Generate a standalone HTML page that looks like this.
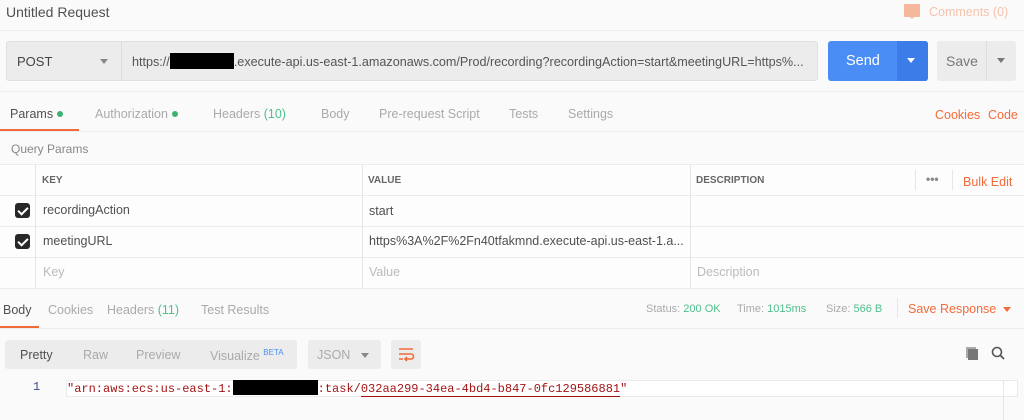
<!DOCTYPE html>
<html><head><style>
*{box-sizing:border-box;margin:0;padding:0}
body{width:1024px;height:420px;background:#fafafa;font-family:"Liberation Sans",sans-serif;font-size:12px;color:#505050;position:relative;overflow:hidden}
.a{position:absolute;white-space:nowrap}
.hl{position:absolute;left:0;width:1024px;height:1px;background:#ececec}
.vl{position:absolute;width:1px;background:#e6e6e6}
.g{color:#aaa}
.gr{color:#4fc08d}
.o{color:#f26b3a}
.dot{display:inline-block;width:6px;height:6px;border-radius:50%;background:#3cb371;margin-left:4px;vertical-align:1px}
.cb{position:absolute;width:15px;height:15px;background:#282828;border-radius:3px}
.cb:after{content:"";position:absolute;left:5px;top:2px;width:4px;height:8px;border:solid #fff;border-width:0 2px 2px 0;transform:rotate(45deg)}
</style></head><body>
<div class="a" style="left:6px;top:4px;font-size:14px;color:#505050">Untitled Request</div>
<div class="a" style="left:904px;top:4px;width:16px;height:13px;background:#f6b89c;border-radius:1px"></div>
<div class="a" style="left:909px;top:16px;width:0;height:0;border:3px solid transparent;border-top-color:#f6b89c"></div>
<div class="a" style="left:929px;top:5px;color:#f5c2ac;font-size:12.5px">Comments (0)</div>
<div class="hl" style="top:30px"></div>

<div class="a" style="left:6px;top:41px;width:812px;height:40px;background:#ececec;border:1px solid #e0e0e0;border-radius:3px"></div>
<div class="vl" style="left:121px;top:42px;height:38px;background:#dcdcdc"></div>
<div class="a" style="left:17px;top:54px;font-size:13px;color:#444">POST</div>
<div class="a" style="left:100px;top:59px;border:4px solid transparent;border-top:5px solid #888"></div>
<div class="a" style="left:132px;top:53px;font-size:12.6px;color:#555">https://<span style="display:inline-block;width:64px;height:16px;background:#000;vertical-align:-3px"></span>.execute-api.us-east-1.amazonaws.com/Prod/recording?recordingAction=start&amp;meetingURL=https%...</div>

<div class="a" style="left:828px;top:41px;width:100px;height:40px;background:#4a8ef5;border-radius:3px"></div>
<div class="a" style="left:897px;top:41px;width:31px;height:40px;background:#3b7ce8;border-radius:0 3px 3px 0"></div>
<div class="a" style="left:846px;top:53px;font-size:14.5px;color:#fff">Send</div>
<div class="a" style="left:907px;top:58px;border:4px solid transparent;border-top:5px solid #fff"></div>
<div class="a" style="left:937px;top:41px;width:79px;height:40px;background:#ececec;border-radius:3px"></div>
<div class="vl" style="left:986px;top:41px;height:40px;background:#dcdcdc"></div>
<div class="a" style="left:946px;top:53px;font-size:14px;color:#777">Save</div>
<div class="a" style="left:997px;top:58px;border:4px solid transparent;border-top:5px solid #777"></div>
<div class="hl" style="top:91px"></div>

<div class="a" style="left:10px;top:107px;font-size:12.5px;color:#505050">Params<span class="dot"></span></div>
<div class="a" style="left:95px;top:107px;font-size:12.5px" ><span class="g">Authorization</span><span class="dot"></span></div>
<div class="a" style="left:213px;top:107px;font-size:12.5px"><span class="g">Headers </span><span class="gr">(10)</span></div>
<div class="a g" style="left:321px;top:107px;font-size:12.5px">Body</div>
<div class="a g" style="left:379px;top:107px;font-size:12.5px">Pre-request Script</div>
<div class="a g" style="left:509px;top:107px;font-size:12.5px">Tests</div>
<div class="a g" style="left:568px;top:107px;font-size:12.5px">Settings</div>
<div class="a o" style="left:935px;top:108px;font-size:12.5px">Cookies</div>
<div class="a o" style="left:988px;top:108px;font-size:12.5px">Code</div>
<div class="a" style="left:0;top:129px;width:79px;height:2px;background:#f26b3a"></div>
<div class="hl" style="top:131px"></div>

<div class="a" style="left:11px;top:142px;color:#888;font-size:12px">Query Params</div>
<div class="a" style="left:0;top:164px;width:1024px;height:125px;background:#fdfdfd"></div>
<div class="hl" style="top:164px"></div>
<div class="hl" style="top:195px"></div>
<div class="hl" style="top:226px"></div>
<div class="hl" style="top:257px"></div>
<div class="hl" style="top:288px"></div>
<div class="vl" style="left:35px;top:164px;height:124px"></div>
<div class="vl" style="left:362px;top:164px;height:124px"></div>
<div class="vl" style="left:690px;top:164px;height:124px"></div>
<div class="vl" style="left:915px;top:170px;height:20px"></div>
<div class="vl" style="left:952px;top:170px;height:20px"></div>
<div class="a" style="left:42px;top:175px;font-size:10px;font-weight:bold;color:#666">KEY</div>
<div class="a" style="left:368px;top:175px;font-size:10px;font-weight:bold;color:#666">VALUE</div>
<div class="a" style="left:696px;top:175px;font-size:10px;font-weight:bold;color:#666">DESCRIPTION</div>
<div class="a" style="left:926px;top:172px;color:#888;font-weight:bold">•••</div>
<div class="a o" style="left:963px;top:175px;font-size:12.5px">Bulk Edit</div>
<div class="cb" style="left:15px;top:203px"></div>
<div class="cb" style="left:15px;top:234px"></div>
<div class="a" style="left:43px;top:203px;font-size:12.5px;color:#505050">recordingAction</div>
<div class="a" style="left:369px;top:204px;font-size:12.5px;color:#505050">start</div>
<div class="a" style="left:43px;top:234px;font-size:12.5px;color:#505050">meetingURL</div>
<div class="a" style="left:369px;top:234px;font-size:12.5px;color:#505050">https%3A%2F%2Fn40tfakmnd.execute-api.us-east-1.a...</div>
<div class="a" style="left:43px;top:265px;font-size:12.5px;color:#bbb">Key</div>
<div class="a" style="left:369px;top:265px;font-size:12.5px;color:#bbb">Value</div>
<div class="a" style="left:697px;top:265px;font-size:12.5px;color:#bbb">Description</div>

<div class="a" style="left:3px;top:303px;font-size:12.5px;color:#505050">Body</div>
<div class="a g" style="left:48px;top:303px;font-size:12.5px">Cookies</div>
<div class="a" style="left:107px;top:303px;font-size:12.5px"><span class="g">Headers </span><span class="gr">(11)</span></div>
<div class="a g" style="left:201px;top:303px;font-size:12.5px">Test Results</div>
<div class="a" style="left:0;top:326px;width:39px;height:2px;background:#f26b3a"></div>
<div class="hl" style="top:328px"></div>
<div class="a" style="left:646px;top:303px;font-size:11px"><span class="g">Status: </span><span class="gr">200 OK</span></div>
<div class="a" style="left:737px;top:303px;font-size:11px"><span class="g">Time: </span><span class="gr">1015ms</span></div>
<div class="a" style="left:826px;top:303px;font-size:11px"><span class="g">Size: </span><span class="gr">566 B</span></div>
<div class="vl" style="left:897px;top:298px;height:20px"></div>
<div class="a o" style="left:908px;top:302px;font-size:12.5px">Save Response</div>
<div class="a" style="left:1003px;top:307px;border:4px solid transparent;border-top:5px solid #f26b3a"></div>

<div class="a" style="left:5px;top:340px;width:292px;height:29px;background:#ececec;border-radius:3px"></div>
<div class="a" style="left:20px;top:348px;font-size:12.5px;color:#505050">Pretty</div>
<div class="a g" style="left:83px;top:348px;font-size:12.5px">Raw</div>
<div class="a g" style="left:136px;top:348px;font-size:12.5px">Preview</div>
<div class="a g" style="left:210px;top:348px;font-size:12.5px">Visualize <sup style="color:#4a8ef5;font-size:8px">BETA</sup></div>
<div class="a" style="left:308px;top:340px;width:73px;height:29px;background:#ececec;border-radius:3px"></div>
<div class="a g" style="left:317px;top:348px;font-size:12.5px">JSON</div>
<div class="a" style="left:361px;top:353px;border:4px solid transparent;border-top:5px solid #888"></div>
<div class="a" style="left:391px;top:340px;width:30px;height:29px;background:#ececec;border-radius:3px"></div>
<svg class="a" style="left:397px;top:346px" width="18" height="16" viewBox="0 0 18 16"><path d="M2 3h14M2 8h12a2.5 2.5 0 0 1 0 5H9M2 13h4M10 11l-2 2 2 2" stroke="#f26b3a" stroke-width="1.6" fill="none"/></svg>
<div class="a" style="left:966px;top:347px;width:10px;height:11px;background:#aaa"></div>
<div class="a" style="left:968px;top:349px;width:10px;height:11px;background:#777"></div>
<svg class="a" style="left:991px;top:346px" width="14" height="14"><circle cx="6" cy="6" r="4.5" stroke="#555" stroke-width="1.6" fill="none"/><path d="M9.5 9.5L13 13" stroke="#555" stroke-width="1.8"/></svg>

<div class="a" style="left:66px;top:380px;width:952px;height:17px;background:#fff;border:1px solid #eaeaea"></div>
<div class="vl" style="left:1003px;top:380px;height:40px"></div>
<div class="a" style="left:33px;top:380px;font-family:'Liberation Mono',monospace;font-size:12px;color:#3a4a8a">1</div>
<div class="a" style="left:67px;top:380px;font-family:'Liberation Mono',monospace;font-size:12px;color:#a31515">"arn:aws:ecs:us-east-1:<span style="display:inline-block;width:85px;height:15px;background:#000;vertical-align:-3px"></span>:task/<span style="border-bottom:1px solid #a31515">032aa299-34ea-4bd4-b847-0fc129586881</span>"</div>
</body></html>
